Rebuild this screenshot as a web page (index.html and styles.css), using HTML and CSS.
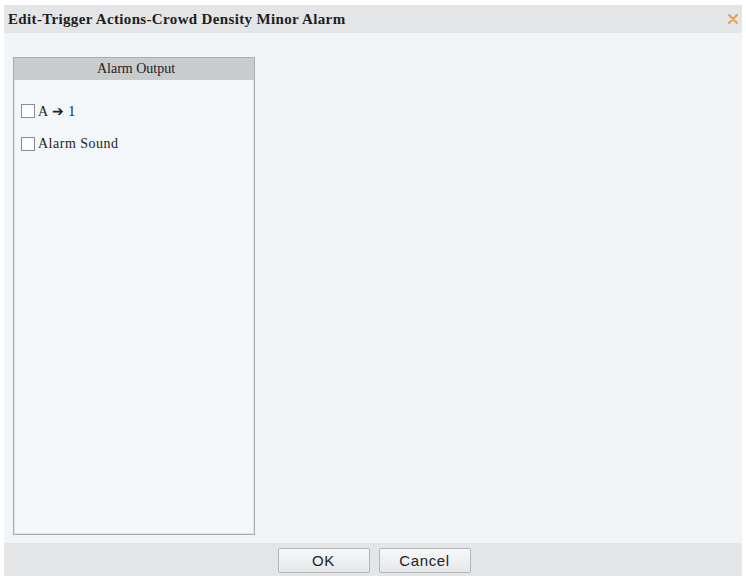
FILE: index.html
```html
<!DOCTYPE html>
<html>
<head>
<meta charset="utf-8">
<link rel="stylesheet" href="styles.css">
</head>
<body>
<div class="dialog">
  <div class="titlebar">
    <span class="title">Edit-Trigger Actions-Crowd Density Minor Alarm</span>
    <span class="close">
      <svg width="10" height="10" viewBox="0 0 10 10"><path d="M1 1L9 9M9 1L1 9" stroke="#e6a35a" stroke-width="2.2" stroke-linecap="round"/></svg>
    </span>
  </div>
  <div class="body">
    <div class="panel">
      <div class="panel-head">Alarm Output</div>
      <div class="panel-list">
        <label class="item"><span class="box"></span><span>A ➔ 1</span></label>
        <label class="item"><span class="box"></span><span>Alarm Sound</span></label>
      </div>
    </div>
  </div>
  <div class="footer">
    <button class="btn">OK</button>
    <button class="btn">Cancel</button>
  </div>
</div>
</body>
</html>
```
FILE: styles.css
```css
html, body {
  margin: 0;
  padding: 0;
  background: #ffffff;
}
.dialog {
  width: 738px;
  height: 571px;
  margin: 5px 0 0 4px;
  display: flex;
  flex-direction: column;
  background: #f2f5f8;
}
.titlebar {
  height: 28px;
  flex: none;
  background: #e3e5e7;
  display: flex;
  align-items: center;
  justify-content: space-between;
  padding: 0 4px 0 4px;
}
.title {
  font-family: "Liberation Serif", "Times New Roman", serif;
  font-weight: bold;
  font-size: 15px;
  letter-spacing: 0.35px;
  color: #1e1e1e;
}
.close {
  display: flex;
  align-items: center;
}
.body {
  flex: 1;
  padding: 24px 0 8px 9px;
  display: flex;
}
.panel {
  width: 240px;
  border: 1px solid #a9adb1;
  box-shadow: inset 0 0 0 1px #dfe3e7;
  background: #f4f7fa;
  display: flex;
  flex-direction: column;
}
.panel-head {
  height: 22px;
  background: #c9cbcd;
  display: flex;
  align-items: center;
  justify-content: center;
  padding-left: 4px;
  font-family: "Liberation Serif", "Times New Roman", serif;
  font-size: 14px;
  color: #222;
}
.panel-list {
  padding: 24px 0 0 7px;
  display: flex;
  flex-direction: column;
  gap: 19px;
}
.item {
  display: flex;
  align-items: center;
  gap: 3px;
  font-family: "Liberation Serif", "Times New Roman", serif;
  font-size: 14px;
  letter-spacing: 0.5px;
  color: #222;
  height: 14px;
}
.box {
  width: 12px;
  height: 12px;
  border: 1px solid #8a8e92;
  background: #fdfdfd;
  flex: none;
}
.footer {
  height: 33px;
  flex: none;
  background: #e3e5e7;
  display: flex;
  justify-content: center;
  align-items: flex-start;
  padding: 5px 0 0 2px;
  box-sizing: border-box;
  gap: 9px;
}
.btn {
  width: 92px;
  height: 25px;
  border: 1px solid #b4b7ba;
  border-radius: 2px;
  background: linear-gradient(#f7f8f9, #e5e7e9);
  font-family: "Liberation Sans", Arial, sans-serif;
  font-size: 15px;
  letter-spacing: 0.6px;
  color: #222;
  padding: 0;
}
```
